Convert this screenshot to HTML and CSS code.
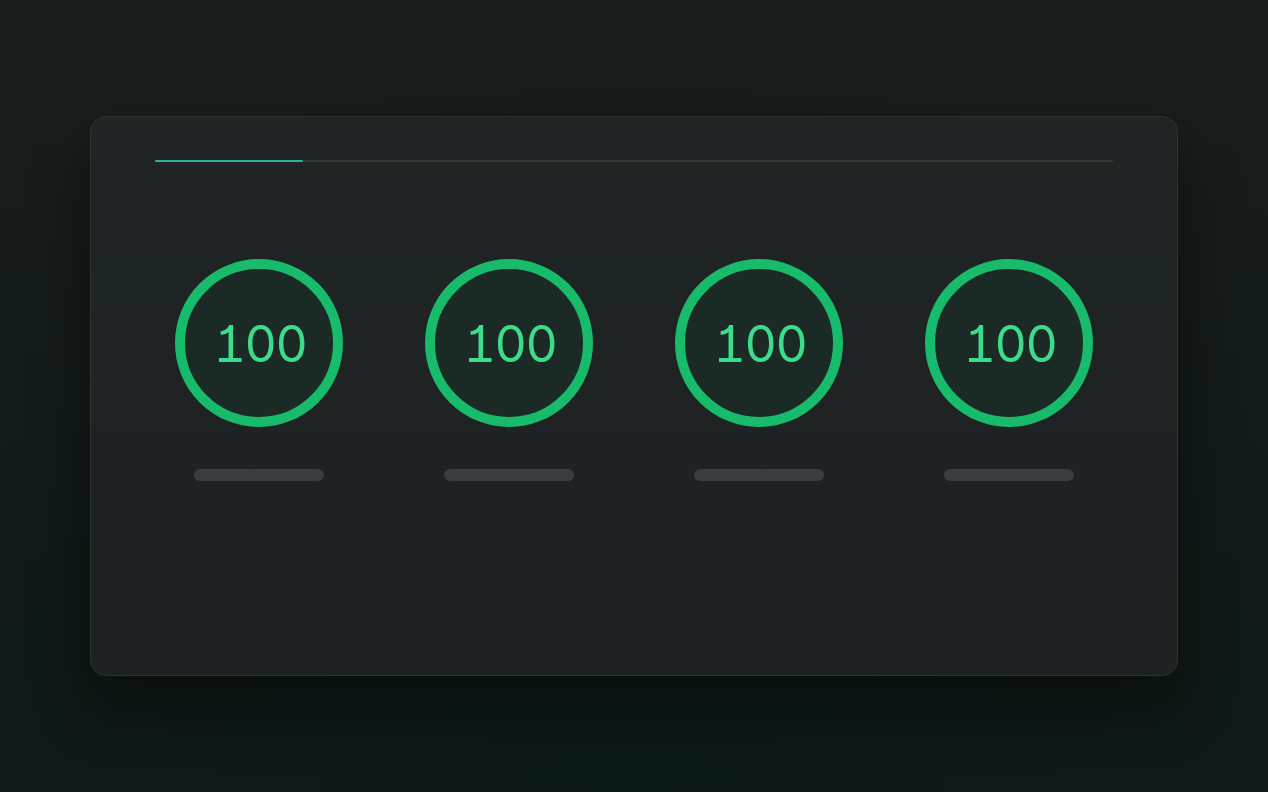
FILE: index.html
```html
<!DOCTYPE html>
<html lang="en">
<head>
<meta charset="utf-8">
<title>Scores</title>
<link rel="stylesheet" href="styles.css">
</head>
<body>
<main class="stage">
  <section class="card">
    <div class="progress"><div class="progress-fill" style="width: 15.5%"></div></div>
    <div class="scores">
      <div class="score">
        <div class="gauge"><span class="value">100</span></div>
        <div class="label-bar"></div>
      </div>
      <div class="score">
        <div class="gauge"><span class="value">100</span></div>
        <div class="label-bar"></div>
      </div>
      <div class="score">
        <div class="gauge"><span class="value">100</span></div>
        <div class="label-bar"></div>
      </div>
      <div class="score">
        <div class="gauge"><span class="value">100</span></div>
        <div class="label-bar"></div>
      </div>
    </div>
  </section>
</main>
</body>
</html>
```
FILE: styles.css
```css
html, body {
  margin: 0;
  padding: 0;
  height: 100%;
}
body {
  background: radial-gradient(ellipse 120% 90% at 50% 100%, #0c1a18 0%, #111a19 50%, #181c1b 100%);
  font-family: Inter, "DejaVu Sans", sans-serif;
}
.stage {
  height: 792px;
  display: flex;
  align-items: center;
  justify-content: center;
}
.card {
  box-sizing: border-box;
  width: 1088px;
  height: 560px;
  padding: 43px 64px 0;
  background: linear-gradient(180deg, #1f2424 0%, #1e2121 100%);
  border: 1px solid #2c3131;
  border-radius: 16px;
  box-shadow: 0 30px 60px rgba(0, 0, 0, 0.45);
}
.progress {
  height: 2px;
  background: #343938;
  border-radius: 1px;
}
.progress-fill {
  height: 100%;
  background: #27b395;
  border-radius: 1px;
}
.scores {
  margin-top: 97px;
  display: grid;
  grid-template-columns: repeat(4, 250px);
  justify-content: center;
  margin-left: -21px;
  margin-right: -21px;
}
.score {
  display: flex;
  flex-direction: column;
  align-items: center;
}
.gauge {
  box-sizing: border-box;
  width: 168px;
  height: 168px;
  border-radius: 50%;
  border: 10px solid #17bb6b;
  background: #1b2a25;
  display: flex;
  align-items: center;
  justify-content: center;
}
.value {
  color: #3ddc8d;
  font-size: 50px;
  font-weight: 400;
  font-feature-settings: "cv01" 1, "tnum" 1;
  letter-spacing: -1.5px;
  line-height: 1;
  margin-top: 2px;
  margin-left: 2px;
}
.label-bar {
  margin-top: 42px;
  width: 130px;
  height: 12px;
  border-radius: 6px;
  background: #3a3d3e;
}
```
